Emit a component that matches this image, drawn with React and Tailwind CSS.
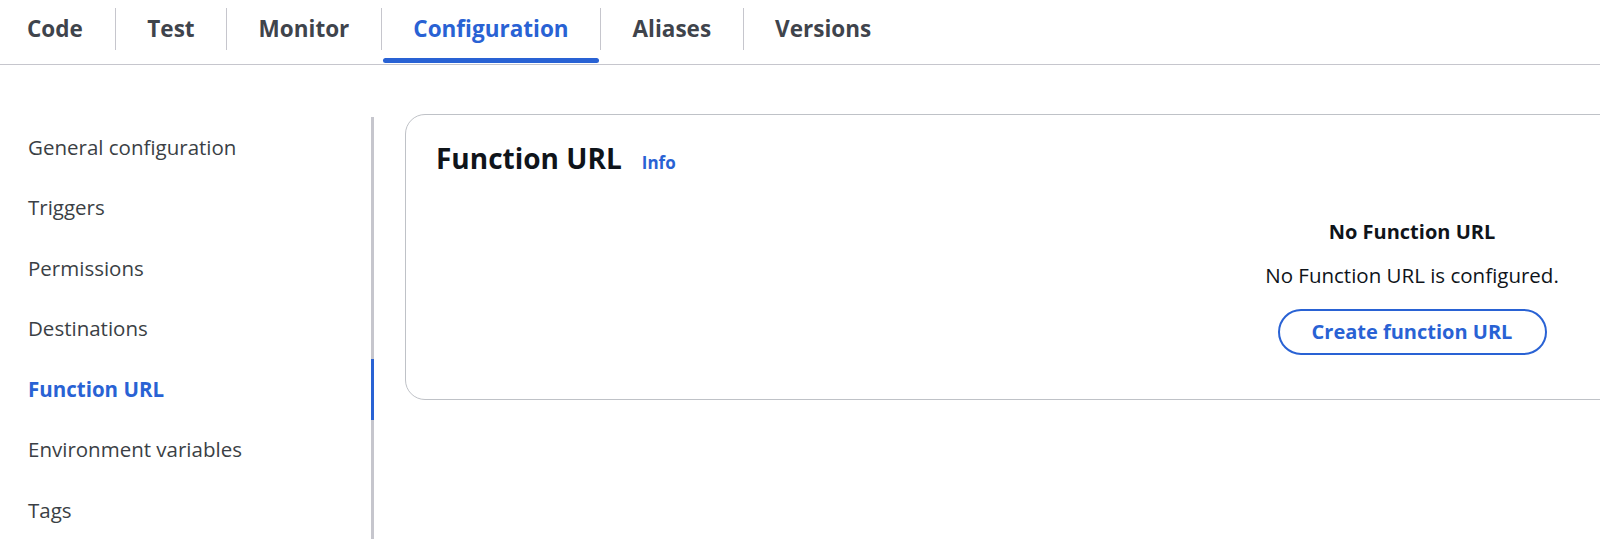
import React, { useState } from "react";

const tabs = ["Code", "Test", "Monitor", "Configuration", "Aliases", "Versions"];

const sections = [
  "General configuration",
  "Triggers",
  "Permissions",
  "Destinations",
  "Function URL",
  "Environment variables",
  "Tags",
];

const App = () => {
  const [activeTab, setActiveTab] = useState("Configuration");
  const [activeSection, setActiveSection] = useState("Function URL");

  return (
    <div className="w-[1600px] h-[539px] overflow-hidden bg-white font-['Open_Sans',sans-serif]">
      {/* Tab strip */}
      <div className="flex h-[65px] border-b border-[#c6c6cd]">
        {tabs.map((tab, i) => (
          <React.Fragment key={tab}>
            {i > 0 && <div className="mt-2 h-[42px] w-px bg-[#c6c6cd]"></div>}
            <button
              onClick={() => setActiveTab(tab)}
              className="flex flex-col"
            >
              <span
                className={`flex h-[58px] items-center text-[22.5px] font-bold ${i === 0 ? "pl-[27px] pr-8" : "px-[31.5px]"} ${
                  activeTab === tab ? "text-[#2962d4]" : "text-[#3f444c]"
                }`}
              >
                {tab}
              </span>
              <span
                className={`mx-[1px] h-[5px] rounded-full ${activeTab === tab ? "bg-[#2962d4]" : "bg-transparent"}`}
              ></span>
            </button>
          </React.Fragment>
        ))}
      </div>

      <div className="flex">
        {/* Side navigation */}
        <nav className="mt-[52px] h-[500px] w-[374px] shrink-0 border-r-[3px] border-[#c6c6cd]">
          {sections.map((s) => (
            <div
              key={s}
              onClick={() => setActiveSection(s)}
              className={`flex h-[60.5px] items-center pl-[28px] text-[20.5px] ${
                activeSection === s
                  ? "-mr-[3px] border-r-[3px] border-[#2962d4] font-bold text-[#2962d4]"
                  : "text-[#3b3f45]"
              }`}
            >
              {s}
            </div>
          ))}
        </nav>

        {/* Function URL panel */}
        <div className="ml-[31px] mt-[49px] h-[286px] w-[1300px] shrink-0 rounded-[20px] border border-[#bfc2c7] pl-[30px] pt-[25px]">
          <div className="flex items-baseline gap-5 leading-[36px]">
            <h2 className="text-[28px] font-bold text-[#0f141a]">Function URL</h2>
            <a className="text-[17px] font-bold text-[#2962d4]">Info</a>
          </div>

          <div className="ml-[816px] mt-[37px] flex w-[320px] flex-col items-center leading-[28px] text-[#0f141a]">
            <p className="mb-[14.5px] text-[20px] font-bold">No Function URL</p>
            <p className="mb-[20px] text-[20.5px]">No Function URL is configured.</p>
            <button className="h-[46px] w-[269px] rounded-full border-2 border-[#2962d4] text-[20px] font-bold text-[#2962d4]">
              Create function URL
            </button>
          </div>
        </div>
      </div>
    </div>
  );
};

export default App;
